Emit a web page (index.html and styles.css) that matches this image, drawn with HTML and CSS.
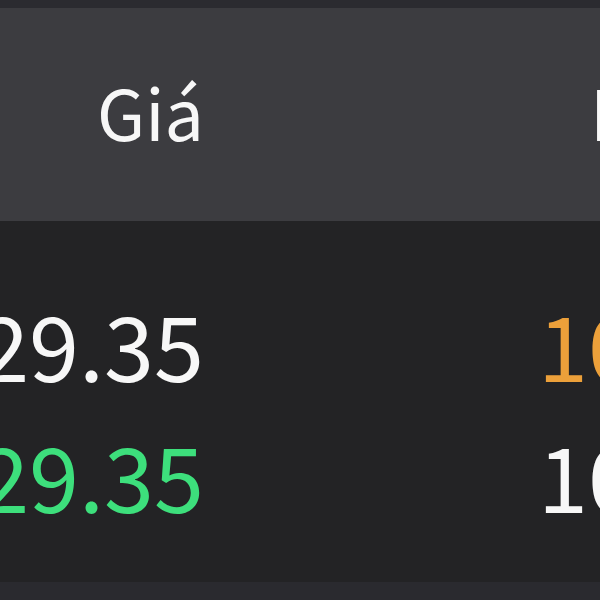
FILE: index.html
```html
<!DOCTYPE html>
<html lang="vi">
<head>
  <meta charset="UTF-8" />
  <meta name="viewport" content="width=device-width, initial-scale=1" />
  <title>Bảng giá</title>
  <link rel="stylesheet" href="styles.css">
</head>
<body>
  <div class="top-bar"></div>
  <div class="board">
    <div class="head-row">
      <div class="cell price">Giá</div>
      <div class="cell volume">Khối lượng</div>
    </div>
    <div class="rows">
      <div class="row">
        <div class="cell price">29.35</div>
        <div class="cell volume orange">100</div>
      </div>
      <div class="row">
        <div class="cell price green">29.35</div>
        <div class="cell volume">100</div>
      </div>
    </div>
  </div>
  <div class="bottom-bar"></div>
</body>
</html>
```

FILE: styles.css
```css
html, body {
  margin: 0;
  height: 100%;
}
body {
  background: #232325;
  color: #f7f7f7;
  font-family: "Noto Sans CJK SC", "Noto Sans", sans-serif;
  display: flex;
  flex-direction: column;
  overflow: hidden;
}
.top-bar {
  height: 8px;
  background: #2b2b30;
}
.board {
  flex: 1;
  display: flex;
  flex-direction: column;
  margin-left: -60px;
}
.head-row, .row {
  display: flex;
  white-space: nowrap;
  box-sizing: border-box;
}
.head-row {
  height: 213px;
  padding-bottom: 8px;
  align-items: center;
  background: #3c3c40;
  font-size: 70px;
}
.rows {
  padding-top: 56px;
  display: flex;
  flex-direction: column;
}
.row {
  height: 131px;
  align-items: center;
  font-size: 90px;
}
.cell.price {
  width: 264px;
  flex: none;
  text-align: right;
}
.cell.volume {
  padding-left: 334px;
}
.head-row .cell.volume {
  padding-left: 386px;
}
.green {
  color: #3ddf7c;
}
.orange {
  color: #eca03a;
}
.bottom-bar {
  height: 18px;
  background: #2a2a2f;
}
```
